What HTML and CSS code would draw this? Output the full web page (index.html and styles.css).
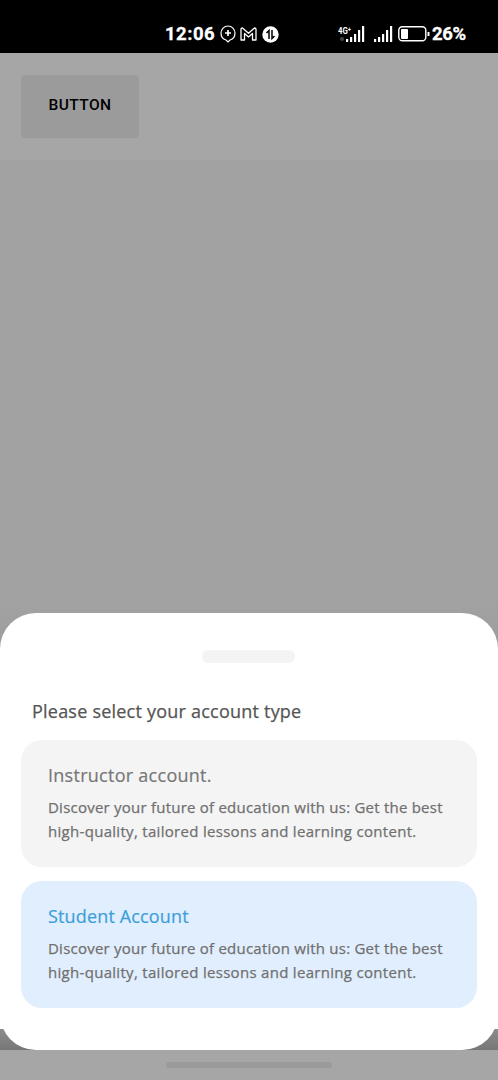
FILE: index.html
```
<!DOCTYPE html>
<html lang="en">
<head>
<meta charset="utf-8">
<meta name="viewport" content="width=device-width">
<title>Account type</title>
<link rel="stylesheet" href="styles.css">
</head>
<body>
<header class="status">
  <span class="time">12:06</span>
  <svg class="icon-pin" width="16" height="18" viewBox="0 0 16 18" fill="none" stroke="#fff" stroke-width="1.2"><path d="M6 15C2.8 14.1 1 11.3 1 8a7 7 0 1 1 14 0c0 3.300-1.800 6.100-5 7l-2 2z"/><path d="M8 5v6M5 8h6" stroke-width="1.700"/></svg>
  <svg class="icon-mail" width="17" height="14" viewBox="0 0 17 14" fill="none" stroke="#fff" stroke-width="1.300" stroke-linejoin="round"><path d="M1 13V2.200Q1 1 2.500 1L8.500 6.200 14.500 1Q16 1 16 2.200V13H12.500V6.500L8.500 10 4.500 6.500V13Z"/></svg>
  <svg class="icon-data" width="17" height="17" viewBox="0 0 17 17"><circle cx="8.500" cy="8.500" r="8.200" fill="#fff"/><path d="M7 13V4.500L4.500 7M10 4v8.500l2.500-2.500" fill="none" stroke="#000" stroke-width="1.500"/></svg>
  <svg class="signal-main" width="27" height="18" viewBox="0 0 27 18" fill="#fff"><circle cx="4" cy="14" r="2" fill="#444"/><path d="M8 14h2.200v3H8zM12 12h2.200v5H12zM16 9h2.200v8H16zM20 5h2.200v12H20zM24 1h2.200v16H24z"/><text x="0" y="8.500" class="network" textLength="13" lengthAdjust="spacingAndGlyphs">4G⁺</text></svg>
  <svg class="signal-second" width="19" height="18" viewBox="0 0 19 18" fill="#fff"><path d="M0 14h2.200v3H0zM4 12h2.200v5H4zM8 9h2.200v8H8zM12 5h2.200v12H12zM16 1h2.200v16H16z"/></svg>
  <svg class="battery" width="32" height="16" viewBox="0 0 32 16"><rect x=".8" y=".8" width="27" height="14" rx="3.500" fill="none" stroke="#fff" stroke-width="1.400"/><rect x="3" y="3" width="7" height="10" rx="1" fill="#fff"/><path d="M30.500 6v4" stroke="#fff" stroke-width="2"/></svg>
  <span class="percent">26%</span>
</header>
<section class="toolbar"><button class="button">BUTTON</button></section>
<main class="page">
  <div class="sheet-area">
    <section class="sheet">
      <div class="handle"></div>
      <h1 class="title"><span>Please select your account type</span></h1>
      <article class="card">
        <h2 class="name instructor">Instructor account.</h2>
        <p class="line first">Discover your future of education with us: Get the best</p>
        <p class="line second">high-quality, tailored lessons and learning content.</p>
      </article>
      <article class="card selected">
        <h2 class="name student">Student Account</h2>
        <p class="line first">Discover your future of education with us: Get the best</p>
        <p class="line second">high-quality, tailored lessons and learning content.</p>
      </article>
    </section>
  </div>
</main>
<footer class="navigation"><div class="home"></div></footer>
</body>
</html>
```
FILE: styles.css
```
* { box-sizing: border-box; }
body { margin: 0; width: 498px; height: 1080px; display: flex; flex-direction: column; overflow: hidden; background: #a2a2a2; font-family: "Open Sans", sans-serif; }
h1, h2, p { margin: 0; white-space: nowrap; }
svg { display: block; flex: none; }
.status { height: 53px; flex: none; background: #000; color: #fff; display: flex; align-items: center; padding: 15px 0 0 165px; font-family: Roboto, sans-serif; font-weight: 700; }
.time { width: 55px; font-size: 18.500px; letter-spacing: .5px; -webkit-text-stroke: .3px #fff; }
.icon-mail { margin-left: 4px; }
.icon-data { margin-left: 5px; }
.signal-main { margin-left: 59px; }
.network { font: 700 9.500px Roboto, sans-serif; }
.signal-second { margin-left: 9px; }
.battery { margin-left: 5px; }
.percent { margin-left: 2px; font-size: 18.500px; letter-spacing: -.4px; -webkit-text-stroke: .3px #fff; }
.toolbar { height: 107px; flex: none; padding: 22px 21px; background: #a6a6a6; }
.button { display: block; width: 118px; height: 63px; padding: 0 0 3px; border: 0; border-radius: 4px; background: #9b9b9b; color: #000; font: 500 15.500px Roboto, sans-serif; letter-spacing: .4px; }
.page { height: 890px; flex: none; padding-top: 453px; background: linear-gradient(#a2a2a2 0 440px, #9d9d9d 490px); }
.sheet-area { background: linear-gradient(transparent 0 40px, #fff 40px 416px, #8b8b8b 416px, #777 437px); }
.sheet { height: 437px; padding: 37px 21px 0; background: #fff; border-radius: 36px; }
.handle { width: 93px; height: 13px; margin-left: 181px; border-radius: 6px; background: #f4f4f4; }
.title { height: 77px; padding: 34px 0 0 11px; color: #555; font-size: 18px; line-height: 28px; font-weight: 400; letter-spacing: .22px; -webkit-text-stroke: .25px #555; }
.card { height: 127px; padding: 21px 27px; border-radius: 21px; background: #f4f4f4; }
.selected { margin-top: 14px; background: #e1eefd; }
.name { height: 34px; font-size: 18px; line-height: 28px; font-weight: 400; color: #777; letter-spacing: .27px; -webkit-text-stroke: .2px currentColor; }
.student { letter-spacing: .15px; color: #3c9fdc; }
.line { height: 24px; color: #707070; font-size: 15px; line-height: 24px; font-weight: 400; letter-spacing: .23px; -webkit-text-stroke: .25px currentColor; }
.second { letter-spacing: .3px; }
.navigation { height: 30px; flex: none; display: flex; justify-content: center; padding-top: 12px; background: #a6a6a6; }
.home { width: 166px; height: 6px; border-radius: 3px; background: #9a9a9a; }
```
